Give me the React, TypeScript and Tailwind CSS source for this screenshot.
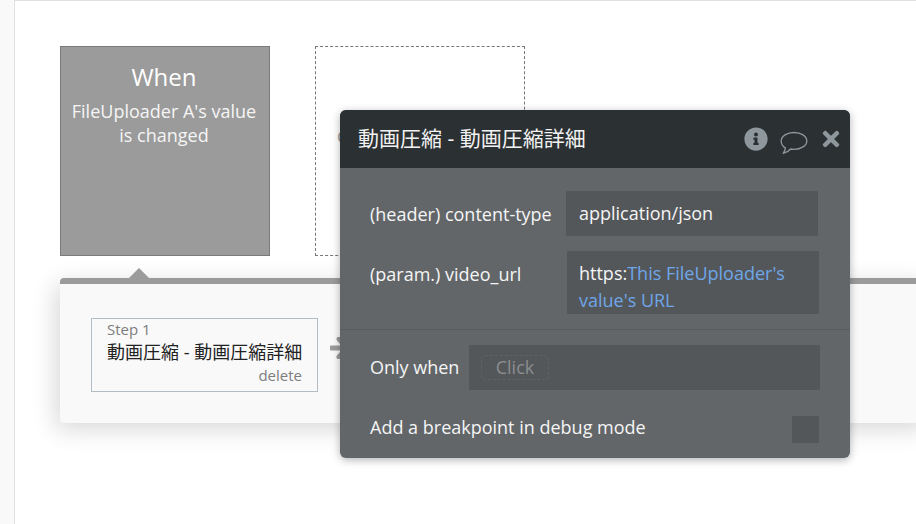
import { FaInfoCircle, FaTimes } from "react-icons/fa";

const cjkFont = "font-['Open_Sans','Noto_Sans_CJK_JP',sans-serif]";

function CommentIcon() {
  return (
    <svg width="28" height="24" viewBox="0 0 28 24" fill="none" className="text-[#8e979c]">
      <path
        d="M14 1.5c7 0 12.8 3.6 12.8 8.400S21 18.300 14 18.300c-1.200 0-2.300-.1-3.400-.3-1.600 1.900-4 3.600-7.400 4.400 1.200-1.500 2-3.300 2.200-5.500C2.700 15.400 1.200 12.900 1.200 9.900 1.200 5.100 7 1.500 14 1.500z"
        stroke="currentColor"
        strokeWidth="1.3"
        strokeLinejoin="round"
      />
    </svg>
  );
}

function PopupRow({ label, children }: { label: string; children: React.ReactNode }) {
  return (
    <div className="flex items-start">
      <span className="mt-[11px] w-[197px] shrink-0 text-[18px] leading-[24px] text-[#f5f5f5]">{label}</span>
      {children}
    </div>
  );
}

function ActionPopup() {
  return (
    <div className="absolute left-[340px] top-[110px] h-[348px] w-[510px] overflow-hidden rounded-md bg-[#626669] shadow-[0_2px_8px_rgba(0,0,0,0.3)]">
      <div className="flex h-[58px] items-center justify-between bg-[#2b3033] pl-[18px] pr-[9px]">
        <span className="text-[21px] text-[#f2f2f2]">動画圧縮 - 動画圧縮詳細</span>
        <div className="flex items-center text-[#8e979c]">
          <FaInfoCircle className="h-[24px] w-[24px]" />
          <span className="ml-[12px] mt-[7px] flex">
            <CommentIcon />
          </span>
          <FaTimes className="ml-[13px] h-[24px] w-[20px]" />
        </div>
      </div>

      <div className="flex flex-col gap-[15px] pl-[30px] pt-[23px]">
        <PopupRow label="(header) content-type">
          <div className="-ml-[1px] flex h-[45px] w-[252px] items-center rounded-[1px] bg-[#54575a] pl-[13px] text-[18px] text-[#f5f5f5]">
            application/json
          </div>
        </PopupRow>
        <PopupRow label="(param.) video_url">
          <div className="h-[63px] w-[252px] rounded-[1px] bg-[#54575a] pl-[12px] pt-[9px] text-[18px] leading-[27px] text-[#f5f5f5]">
            https:<span className="text-[#6ea6e8]">This FileUploader's value's URL</span>
          </div>
        </PopupRow>
      </div>

      <div className="mt-[15px] h-px bg-[#575b5e]" />

      <div className="mt-[15px] flex h-[45px] items-center pl-[30px]">
        <span className="w-[99px] text-[18px] text-[#f5f5f5]">Only when</span>
        <div className="flex h-[45px] w-[351px] items-center rounded-[1px] bg-[#54575a] pl-[12px]">
          <span className="flex h-[25px] w-[68px] items-center justify-center rounded border border-dashed border-[#5f6265] text-[18px] text-[#8b8e90]">
            Click
          </span>
        </div>
      </div>

      <div className="mt-[26px] flex items-start justify-between pl-[30px] pr-[31px]">
        <span className="-mt-[1px] text-[18px] leading-[24px] text-[#f5f5f5]">Add a breakpoint in debug mode</span>
        <div className="h-[27px] w-[27px] rounded-[1px] bg-[#54575a]" />
      </div>
    </div>
  );
}

export default function App() {
  return (
    <div className={`relative flex h-[524px] w-[916px] overflow-hidden bg-white ${cjkFont}`}>
      <div className="h-full w-[15px] shrink-0 border-r border-[#e0e0e0] bg-[#f9f9f9]" />

      <main className="min-w-0 flex-1 border-t border-[#e0e0e0] pl-[45px] pt-[45px]">
        <div className="flex gap-[45px]">
          <div className="flex h-[210px] w-[210px] flex-col items-center border border-[#7a7a7a] bg-[#9b9b9b] pr-[2px] pt-[12px] text-center text-white">
            <span className="text-[24px] leading-[36px]">When</span>
            <span className="mt-[4px] w-[190px] text-[18px] leading-[24px] text-[#f5f5f5]">
              FileUploader A's value is changed
            </span>
          </div>
          <div className="flex h-[210px] w-[210px] items-center whitespace-nowrap border border-dashed border-[#777] pb-[29px] pl-[21px] text-[17px] text-[#999]">
            Click here to add an action...
          </div>
        </div>

        {/* Step strip */}
        <div className="relative mt-[22px] h-[145px] w-[870px] rounded-sm border-t-[6px] border-[#9b9b9b] bg-[#f9f9f9] pl-[31px] pt-[34px] shadow-[-4px_6px_24px_rgba(0,0,0,0.16)]">
          <div className="absolute -top-[16px] left-[69px] h-0 w-0 border-x-[10px] border-b-[10px] border-x-transparent border-b-[#9b9b9b]" />
          <div className="h-[74px] w-[227px] border border-[#b2bec3] pl-[15px] pr-[15px]">
            <div className="text-[15px] leading-[20px] text-[#7d7d7d]">Step 1</div>
            <div className="whitespace-nowrap text-[18px] leading-[26px] text-[#222]">動画圧縮 - 動画圧縮詳細</div>
            <div className="text-right text-[15px] leading-[20px] text-[#7d7d7d]">delete</div>
          </div>
          <svg width="14" height="22" viewBox="0 0 14 22" className="absolute left-[270px] top-[53px] text-[#9b9b9b]">
            <path d="M1.500 11H14M9 2l8 9-8 9" stroke="currentColor" strokeWidth="5" fill="none" strokeLinecap="round" />
          </svg>
        </div>
      </main>

      <ActionPopup />
    </div>
  );
}
